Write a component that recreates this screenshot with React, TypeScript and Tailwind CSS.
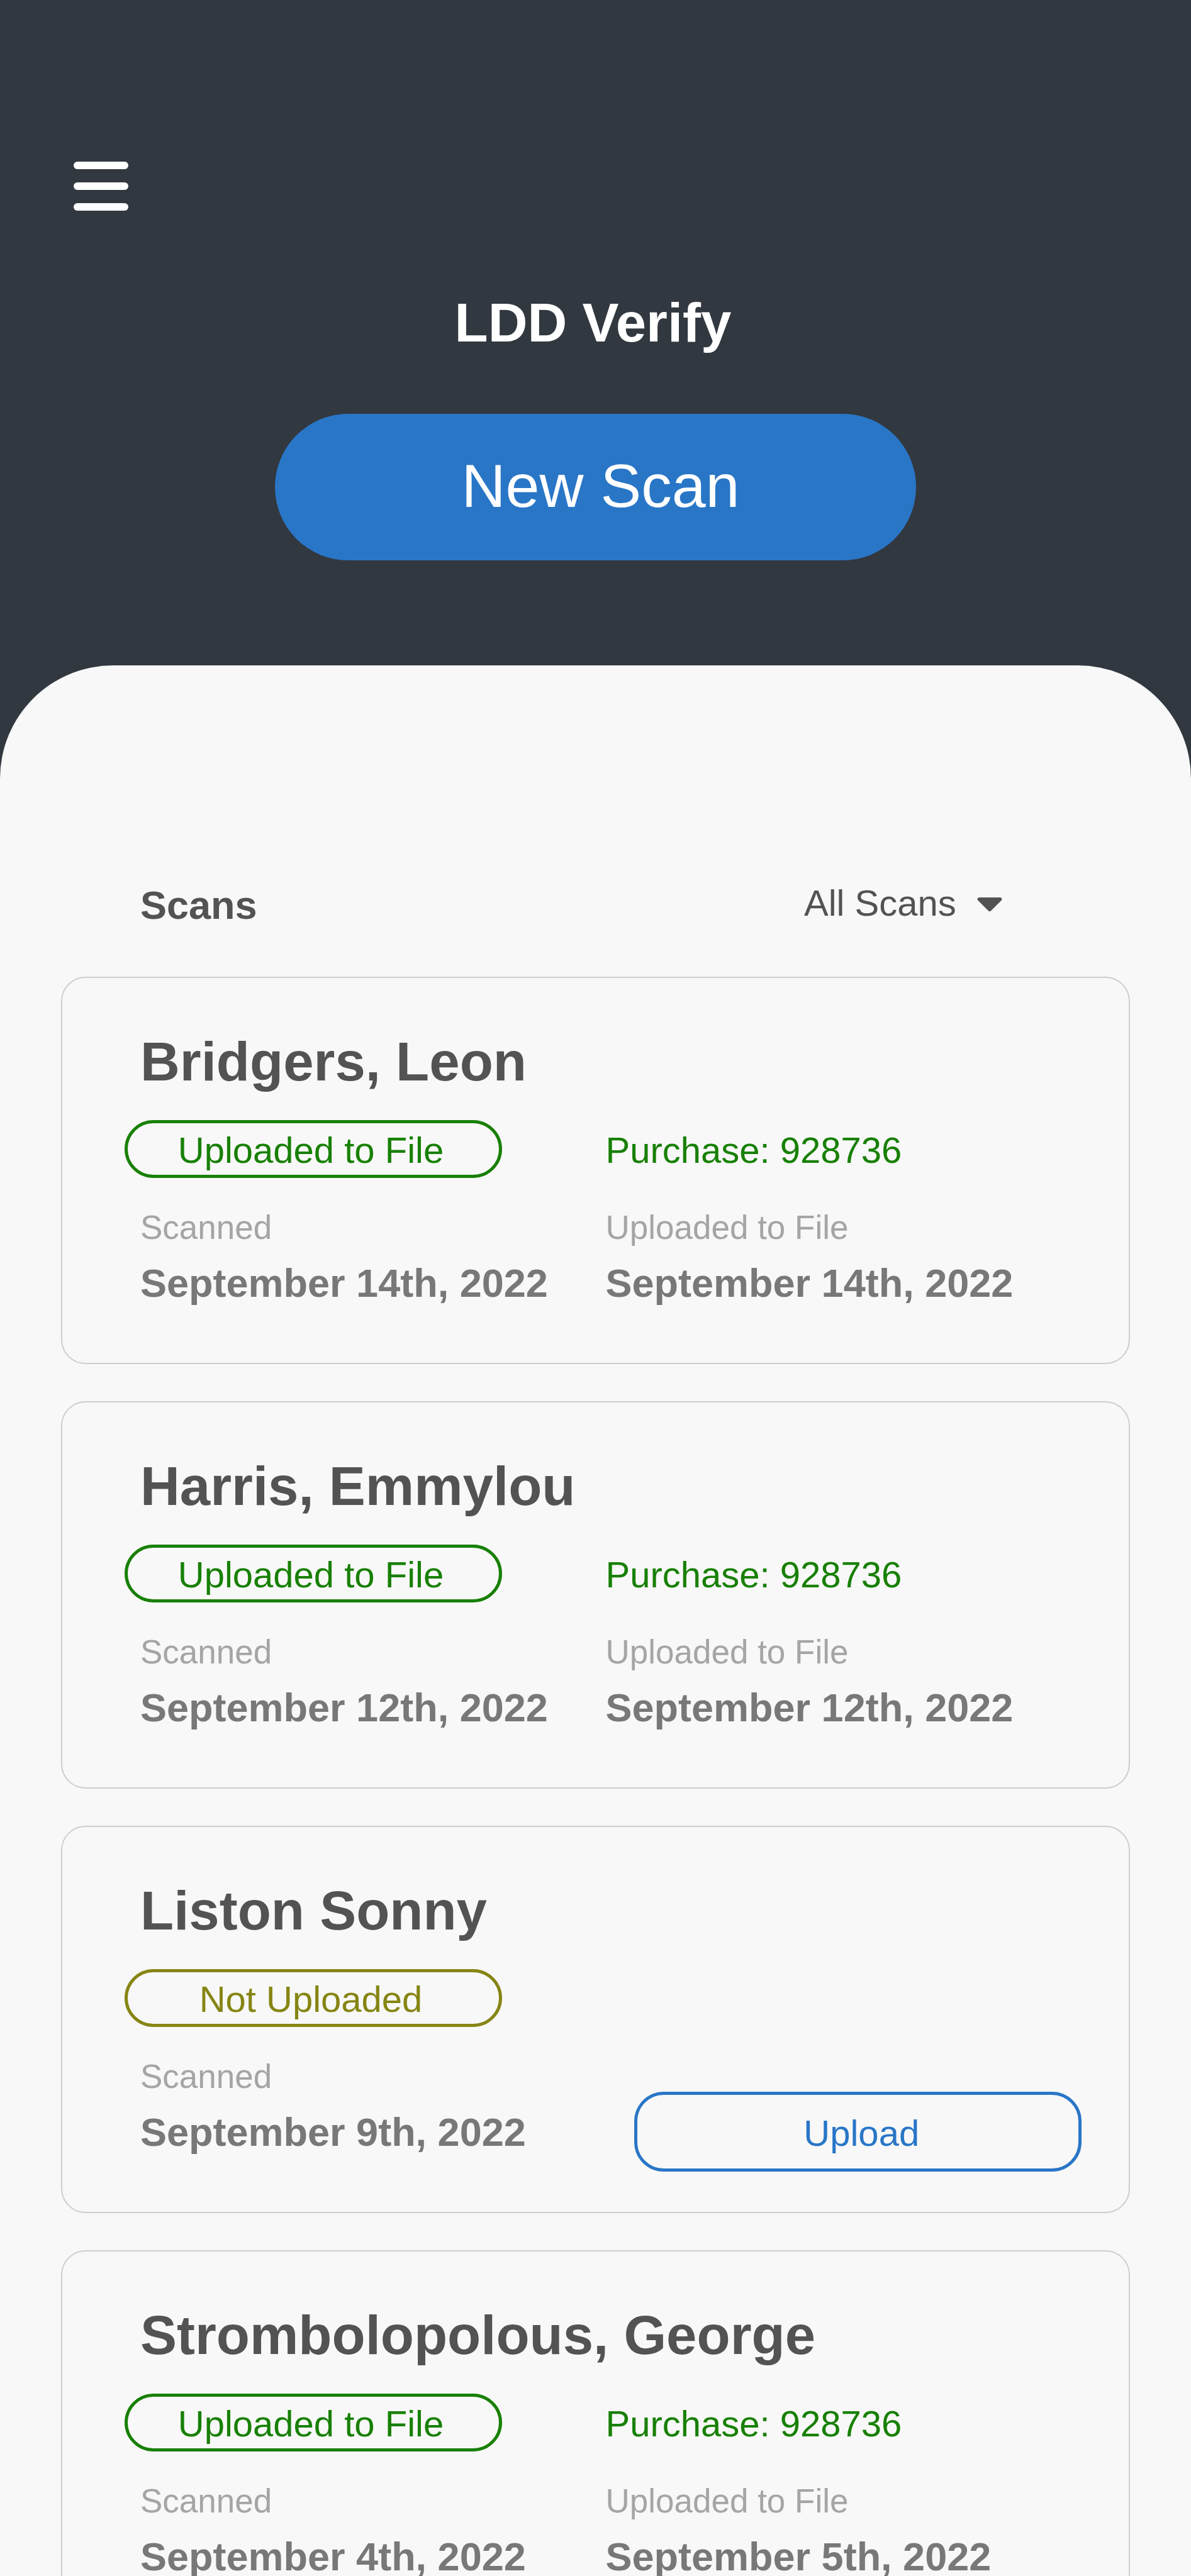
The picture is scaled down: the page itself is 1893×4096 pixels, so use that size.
type Scan = {
  name: string;
  scanned: string;
  uploaded?: string;
  purchase?: string;
};

const scans: Scan[] = [
  { name: "Bridgers, Leon", scanned: "September 14th, 2022", uploaded: "September 14th, 2022", purchase: "928736" },
  { name: "Harris, Emmylou", scanned: "September 12th, 2022", uploaded: "September 12th, 2022", purchase: "928736" },
  { name: "Liston Sonny", scanned: "September 9th, 2022" },
  { name: "Strombolopolous, George", scanned: "September 4th, 2022", uploaded: "September 5th, 2022", purchase: "928736" },
];

function StatusPill({ uploaded }: { uploaded: boolean }) {
  const tone = uploaded ? "border-[#188005] text-[#188005]" : "border-[#868514] text-[#868514]";
  return (
    <span
      className={`flex h-[92px] w-[600px] max-w-full items-center justify-center rounded-full border-[5px] pt-1 pr-2 text-[58px] leading-[70px] ${tone}`}
    >
      {uploaded ? "Uploaded to File" : "Not Uploaded"}
    </span>
  );
}

function DateField({ label, value }: { label: string; value: string }) {
  return (
    <div className="flex flex-col gap-[18px] pb-[25px]">
      <dt className="text-[53px] leading-[64px] text-[#a5a5a5]">{label}</dt>
      <dd className="text-[63px] leading-[76px] font-bold whitespace-nowrap text-[#787878]">{value}</dd>
    </div>
  );
}

function ScanCard({ scan }: { scan: Scan }) {
  return (
    <li className="rounded-[39px] border-2 border-[#cecece] pt-[81px] pr-[75px] pb-16 pl-[99px]">
      <h3 className="pl-[25px] text-[87px] leading-[104px] font-bold text-[#535353]">{scan.name}</h3>
      <div className="mt-[41px] grid grid-cols-2 items-center gap-x-2">
        <StatusPill uploaded={Boolean(scan.uploaded)} />
        {scan.purchase && (
          <p className="pt-1 text-[58px] leading-[70px] text-[#188005]">Purchase: {scan.purchase}</p>
        )}
      </div>
      <div className="mt-[47px] grid grid-cols-2 gap-x-2">
        <dl className="pl-[25px]">
          <DateField label="Scanned" value={scan.scanned} />
        </dl>
        {scan.uploaded ? (
          <dl>
            <DateField label="Uploaded to File" value={scan.uploaded} />
          </dl>
        ) : (
          <button
            type="button"
            className="ml-[45px] h-[127px] self-end rounded-[47px] border-[5px] border-[#2976c7] pt-1 pl-3 text-[58px] leading-[70px] text-[#2976c7]"
          >
            Upload
          </button>
        )}
      </div>
    </li>
  );
}

export default function App() {
  return (
    <div className="h-screen overflow-y-auto bg-[#323840] font-['Liberation_Sans',Arial,sans-serif] [scrollbar-width:none]">
      <header className="flex flex-col items-center px-[117px] pt-[257px] pb-[167px] text-white">
        <button type="button" aria-label="Open menu" className="flex flex-col gap-[21px] self-start">
          <span className="h-3 w-[87px] rounded-full bg-white" />
          <span className="h-3 w-[87px] rounded-full bg-white" />
          <span className="h-3 w-[87px] rounded-full bg-white" />
        </button>
        <h1 className="mt-[126px] pr-2 text-[87px] leading-[104px] font-bold">LDD Verify</h1>
        <button
          type="button"
          className="mt-[93px] h-[233px] w-[1019px] max-w-full rounded-full bg-[#2976c7] pb-1 pl-4 text-[97px] leading-[116px]"
        >
          New Scan
        </button>
      </header>

      <main className="min-h-screen rounded-t-[180px] bg-[#f8f8f8] px-[97px] pt-[343px] pb-[97px]">
        <div className="flex items-start justify-between pr-[203px] pl-[126px] text-[#535353]">
          <h2 className="text-[63px] leading-[76px] font-bold">Scans</h2>
          <div className="relative">
            <select
              aria-label="Filter scans"
              className="h-[70px] w-[315px] cursor-pointer appearance-none bg-transparent text-[58px] leading-[70px]"
            >
              <option>All Scans</option>
              <option>Uploaded</option>
              <option>Not Uploaded</option>
            </select>
            <svg
              viewBox="0 0 41 23"
              className="pointer-events-none absolute top-[26px] right-0 h-[22px] w-10"
              fill="currentColor"
              aria-hidden="true"
            >
              <path d="M3 0H38C40.6 0 41.8 3.2 39.9 5L22.6 22.1C21.4 23.3 19.6 23.3 18.4 22.1L1.1 5C-.8 3.2 .4 0 3 0Z" />
            </svg>
          </div>
        </div>

        <ul className="mt-[76px] flex flex-col gap-[59px]">
          {scans.map((scan) => (
            <ScanCard key={scan.name} scan={scan} />
          ))}
        </ul>
      </main>
    </div>
  );
}
